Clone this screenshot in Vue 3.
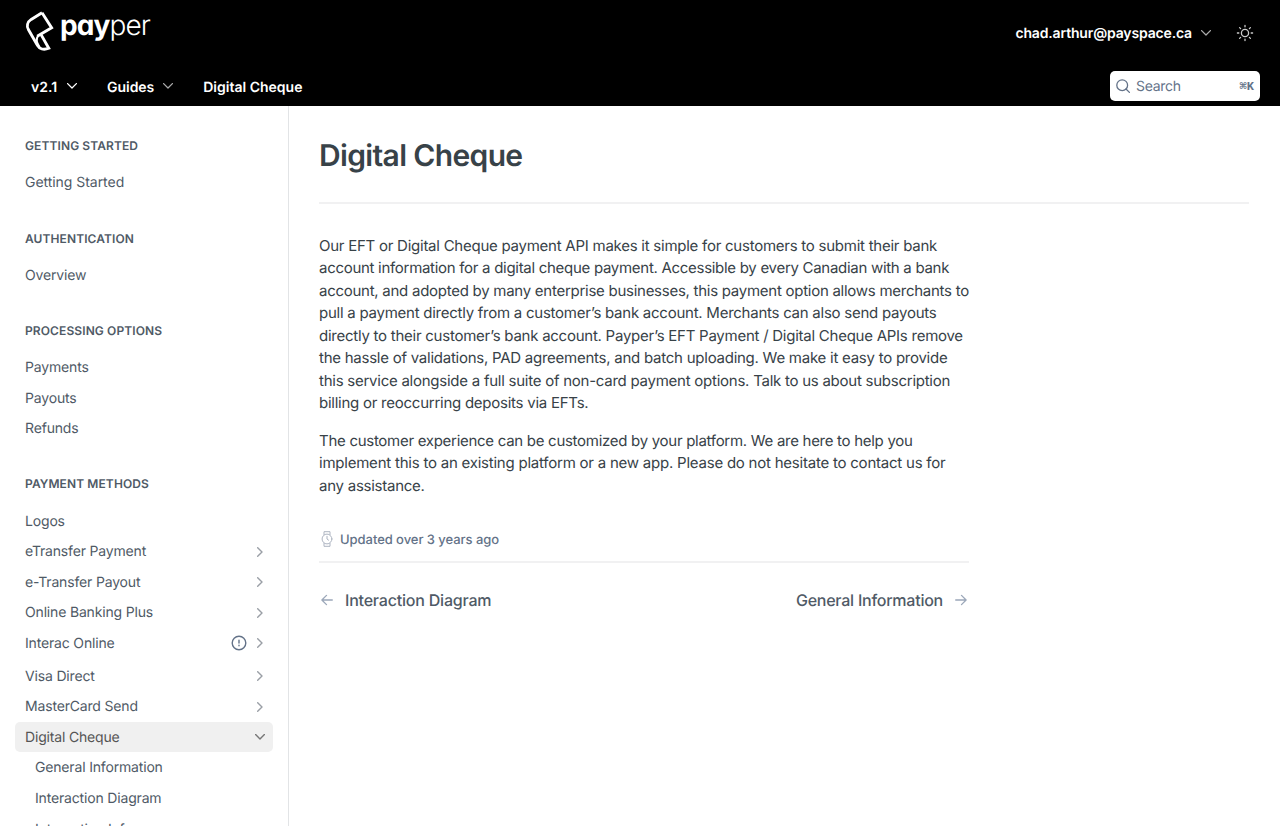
<script setup>
const sections = [
  { title: 'Getting Started', items: [{ label: 'Getting Started', wide: true }] },
  { title: 'Authentication', items: [{ label: 'Overview' }] },
  { title: 'Processing Options', items: [{ label: 'Payments' }, { label: 'Payouts' }, { label: 'Refunds' }] },
  {
    title: 'Payment Methods',
    items: [
      { label: 'Logos' },
      { label: 'eTransfer Payment', arrow: true },
      { label: 'e-Transfer Payout', arrow: true },
      { label: 'Online Banking Plus', arrow: true },
      { label: 'Interac Online', arrow: true, warn: true },
      { label: 'Visa Direct', arrow: true },
      { label: 'MasterCard Send', arrow: true },
      { label: 'Digital Cheque', open: true },
      { label: 'General Information', sub: true },
      { label: 'Interaction Diagram', sub: true },
      { label: 'Integration Info', sub: true },
    ],
  },
]
const intro = [
  'Our EFT or Digital Cheque payment API makes it simple for customers to submit their bank',
  'account information for a digital cheque payment. Accessible by every Canadian with a bank',
  'account, and adopted by many enterprise businesses, this payment option allows merchants to',
  'pull a payment directly from a customer’s bank account. Merchants can also send payouts',
  'directly to their customer’s bank account. Payper’s EFT Payment / Digital Cheque APIs remove',
  'the hassle of validations, PAD agreements, and batch uploading. We make it easy to provide',
  'this service alongside a full suite of non-card payment options. Talk to us about subscription',
  'billing or reoccurring deposits via EFTs.',
]
const outro = [
  'The customer experience can be customized by your platform. We are here to help you',
  'implement this to an existing platform or a new app. Please do not hesitate to contact us for',
  'any assistance.',
]
</script>

<template>
  <div class="page">
    <header class="header">
      <div class="top">
        <div class="logo">
          <svg class="mark" width="30" height="42" viewBox="0 0 30 42">
            <g fill="none" stroke="#fff" stroke-width="2.9" stroke-linejoin="miter">
              <path d="M17 2.8 L6.2 9.4 C2.2 12 1.4 16.2 3.5 19.8 L12.4 35.2 C14.4 38.8 18.6 40.4 23.8 38.2 L16.2 24.9" />
              <path d="M17 2.8 L26.6 17.8 L12.2 26.3" />
              <path d="M13 25.8 C10.8 29 11.6 33 14.5 37" stroke-width="2" />
            </g>
          </svg>
          <span class="word"><b>pay</b><span>per</span></span>
        </div>
        <div class="account">
          <span class="mail">chad.arthur@payspace.ca</span>
          <svg class="chev dim" width="10" height="6" viewBox="0 0 10 6"><path d="M.6.6 5 5 9.4.6" /></svg>
          <svg class="sun" width="18" height="18" viewBox="0 0 18 18">
            <circle cx="9" cy="9" r="3.6" />
            <path d="M9 1.4v1.4M9 15.2v1.4M1.4 9h1.4M15.2 9h1.4M3.6 3.6l1 1M13.4 13.4l1 1M3.6 14.4l1-1M13.4 4.6l1-1" />
          </svg>
        </div>
      </div>
      <div class="nav">
        <span class="n1">v2.1</span>
        <svg class="chev c1" width="10" height="6" viewBox="0 0 10 6"><path d="M.6.6 5 5 9.4.6" /></svg>
        <span class="n2">Guides</span>
        <svg class="chev dim c2" width="10" height="6" viewBox="0 0 10 6"><path d="M.6.6 5 5 9.4.6" /></svg>
        <span class="n3">Digital Cheque</span>
        <div class="search">
          <svg width="14" height="14" viewBox="0 0 14 14"><circle cx="6.2" cy="6.2" r="5.4" /><path d="M10 10l3.4 3.4" /></svg>
          <span class="ph">Search</span>
          <span class="key">⌘K</span>
        </div>
      </div>
    </header>
    <div class="body">
      <aside class="side">
        <section v-for="s in sections" :key="s.title">
          <h2>{{ s.title }}</h2>
          <div v-for="i in s.items" :key="i.label" class="item" :class="{ active: i.open, sub: i.sub, warned: i.warn, wide: i.wide }">
            <span>{{ i.label }}</span>
            <svg v-if="i.warn" class="warn" width="16" height="16" viewBox="0 0 16 16"><circle cx="8" cy="8" r="6.8" /><path d="M8 5.2v2.8M8 10.3v.4" /></svg>
            <svg v-if="i.arrow" class="arrow" width="6" height="10" viewBox="0 0 6 10"><path d="M.7.7 5 5 .7 9.3" /></svg>
            <svg v-if="i.open" class="down" width="10" height="6" viewBox="0 0 10 6"><path d="M.6.6 5 5 9.4.6" /></svg>
          </div>
        </section>
      </aside>
      <main class="main">
        <h1><span>Digital Cheque</span></h1>
        <article>
          <p class="intro"><span v-for="l in intro" :key="l">{{ l }}</span></p>
          <p class="outro"><span v-for="l in outro" :key="l">{{ l }}</span></p>
          <div class="updated">
            <svg width="12" height="16" viewBox="0 0 12 16">
              <circle cx="6" cy="8" r="4.9" />
              <path d="M3 3.7V.7h6v3M3 12.3v3h6v-3M6 5.3V8l1.6 1.2" />
            </svg>
            <span>Updated over 3 years ago</span>
          </div>
          <div class="pager">
            <a><svg width="12" height="12" viewBox="0 0 12 12"><path d="M11.3 6H1M5.5 1.4.9 6l4.6 4.6" /></svg><span>Interaction Diagram</span></a>
            <a><span>General Information</span><svg width="12" height="12" viewBox="0 0 12 12"><path d="M.7 6H11M6.5 1.4 11.1 6l-4.6 4.6" /></svg></a>
          </div>
        </article>
      </main>
    </div>
  </div>
</template>

<style>
body { margin: 0; overflow: hidden; }
</style>

<style scoped>
.page { width: 1280px; height: 826px; overflow: hidden; background: #fff; font-family: Inter, "Liberation Sans", sans-serif; text-rendering: geometricPrecision; }
.page * { box-sizing: border-box; }
svg { fill: none; flex: none; display: block; stroke-linecap: round; stroke-linejoin: round; }
span { white-space: nowrap; }
.header { height: 106px; background: #000; color: #fff; font-size: 14px; font-weight: 600; }
.top { height: 66px; display: flex; justify-content: space-between; align-items: flex-start; }
.logo { display: flex; padding: 10px 0 0 25px; }
.mark { stroke-linecap: butt; }
.word { font-size: 28px; line-height: 30px; font-weight: 300; margin-left: 5px; font-feature-settings: "cv11"; letter-spacing: -0.9px; }
.word b { font-weight: 700; }
.account { display: flex; align-items: center; height: 65px; padding-right: 26px; letter-spacing: -0.16px; }
.mail, .n1, .n2, .n3 { padding-top: 2px; }
.chev { stroke: #fff; stroke-width: 1.3; }
.dim { stroke: #aaa; }
.account .chev { margin-left: 9px; }
.sun { stroke: #ccc; stroke-width: 1.3; margin-left: 25px; }
.nav { display: flex; align-items: center; height: 40px; padding: 0 20px 0 31px; }
.c1 { margin: 0 30px 0 10px; }
.c2 { margin: 0 30px 0 9px; }
.n2 { letter-spacing: -0.05px; }
.search { margin-left: auto; width: 150px; height: 30px; background: #fff; border-radius: 5px; display: flex; align-items: center; padding: 0 6px 1px; color: #637288; font-weight: 400; }
.search svg { stroke: #637288; stroke-width: 1.3; }
.ph { margin-left: 6px; padding-top: 2px; letter-spacing: -0.3px; }
.key { margin: 2px 0 0 auto; font-family: "Liberation Mono", "DejaVu Sans Mono", monospace; font-size: 12px; font-weight: 700; }
.body { display: flex; height: 720px; }
.side { width: 289px; flex: none; border-right: 1px solid #e2e4e6; padding: 30.3px 15px 0; overflow: hidden; color: #4f5a66; }
section { margin-bottom: 30.45px; }
h2 { margin: 0 0 11.3px; padding-left: 10px; height: 20px; line-height: 20px; font-size: 12px; font-weight: 600; text-transform: uppercase; letter-spacing: 0.1px; }
.item { display: flex; align-items: center; height: 30.6px; padding: 0 10px; font-size: 14px; border-radius: 5px; letter-spacing: -0.17px; }
.item span { margin-right: auto; }
.item.wide { letter-spacing: -0.04px; }
.item.sub { padding-left: 20px; }
.item.sub:last-child { margin-top: 1px; }
.item.warned { height: 30.6px; margin-bottom: 2px; }
.item.active { background: #f0f0f0; color: #555; padding-right: 8px; height: 30.2px; margin-bottom: 0.4px; }
.arrow { stroke: #9a9fa6; stroke-width: 1.4; }
.down { stroke: #777; stroke-width: 1.4; }
.warn { stroke: #637288; stroke-width: 1.4; margin-right: 10px; }
.main { width: 960px; padding-left: 30px; color: #384248; }
h1 { margin: 0; height: 98px; padding-top: 30px; border-bottom: 2px solid #f1f1f2; font-size: 30px; line-height: 40px; font-weight: 600; letter-spacing: -0.65px; }
article { width: 650px; padding-top: 30.6px; }
p { margin: 0 0 15px; font-size: 15px; line-height: 22.5px; letter-spacing: -0.25px; }
p span { display: block; }
.intro span:nth-child(2) { letter-spacing: -0.29px; }
.intro span:nth-child(3) { letter-spacing: -0.265px; }
.outro span:nth-child(1) { letter-spacing: -0.285px; }
.outro span:nth-child(2) { letter-spacing: -0.225px; }
.updated { margin-top: 28px; height: 38px; border-bottom: 2px solid #f1f1f2; display: flex; align-items: center; padding: 0 0 7px 2px; font-size: 13px; font-weight: 500; color: #637288; letter-spacing: -0.05px; }
.updated svg { stroke: #adb4c1; margin: 0 7px 1px 0; }
.pager { display: flex; justify-content: space-between; align-items: center; height: 74px; padding: 0 2px; font-size: 16px; font-weight: 500; color: #4f5a66; letter-spacing: -0.2px; }
.pager a { display: flex; align-items: center; gap: 12px; }
.pager a:last-child { letter-spacing: -0.24px; }
.pager svg { stroke: #9ba7b9; stroke-width: 1.3; }
</style>
